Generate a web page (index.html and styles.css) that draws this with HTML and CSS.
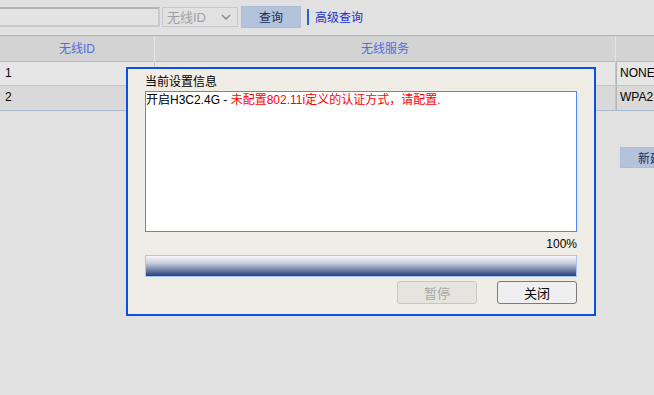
FILE: index.html
```html
<!DOCTYPE html>
<html lang="zh-CN">
<head>
    <meta charset="UTF-8">
    <title>无线服务</title>
    <link rel="stylesheet" href="styles.css">
</head>
<body>

    <div class="toolbar">
        <div class="search-box"></div>
        <div class="fake-select">
            <span>无线ID</span>
            <svg width="10" height="6" viewBox="0 0 10 6"><path d="M1 1 L5 5 L9 1" fill="none" stroke="#8a8a8a" stroke-width="1.5"/></svg>
        </div>
        <button class="btn-query">查询</button>
        <span class="bar"></span>
        <a class="adv-link" href="#">高级查询</a>
    </div>

    <div class="table">
        <div class="cell head">无线ID</div>
        <div class="cell head">无线服务</div>
        <div class="cell head last"></div>

        <div class="cell row1">1</div>
        <div class="cell row1"></div>
        <div class="cell row1 last">NONE</div>

        <div class="cell row2">2</div>
        <div class="cell row2"></div>
        <div class="cell row2 last">WPA2</div>
    </div>

    <div class="actions">
        <button class="btn-new">新建</button>
    </div>

    <div class="dialog">
        <div class="dlg-label">当前设置信息</div>
        <div class="log">开启H3C2.4G - <span class="warn">未配置802.11i定义的认证方式，请配置.</span></div>
        <div class="percent">100%</div>
        <div class="progress"></div>
        <div class="dlg-buttons">
            <button class="dlg-btn" disabled>暂停</button>
            <button class="dlg-btn">关闭</button>
        </div>
    </div>

</body>
</html>
```

FILE: styles.css
```css
body {
    margin: 0;
    background-color: #e1e1e1;
    font-family: "Liberation Sans", "Noto Sans CJK SC", sans-serif;
    font-size: 12px;
    color: #000;
    overflow: hidden;
}
.toolbar {
    display: flex;
    align-items: center;
    border-bottom: 1px solid #a3b6cf;
    box-sizing: border-box;
    height: 36px;
    padding-bottom: 2px;
}
.search-box {
    width: 164px;
    height: 20px;
    margin-left: -4px;
    box-sizing: border-box;
    border: 2px solid #b4b4b4;
    border-right-color: #cacaca;
    border-bottom-color: #cacaca;
    background: #e3e3e3;
}
.fake-select {
    width: 76px;
    height: 20px;
    margin-left: 2px;
    box-sizing: border-box;
    border: 1px solid #c9c9c9;
    display: flex;
    align-items: center;
    justify-content: space-between;
    padding: 0 6px 0 4px;
    color: #a0a0a0;
    font-size: 13px;
}
.btn-query {
    width: 60px;
    height: 22px;
    margin-left: 3px;
    border: 1px solid #aebdd6;
    background: #b3c3dc;
    font-family: inherit;
    font-size: 12px;
    color: #1a2a50;
    padding: 0;
}
.bar {
    width: 2px;
    height: 16px;
    margin-left: 6px;
    background: #2066c4;
}
.adv-link {
    margin-left: 6px;
    color: #1a2ed0;
    text-decoration: none;
    font-size: 12px;
}
.table {
    display: grid;
    grid-template-columns: 155px 461px 1fr;
    border-bottom: 1px solid #a9bbd2;
}
.cell {
    box-sizing: border-box;
    height: 24px;
    line-height: 23px;
    padding-left: 5px;
    border-bottom: 1px solid #c4c4c4;
    border-right: 1px solid #c4c4c4;
}
.cell.last {
    border-right: none;
    padding-left: 3px;
}
.head {
    height: 26px;
    line-height: 26px;
    background: #d3d3d3;
    color: #4f6ee0;
    text-align: center;
    padding-left: 0;
    border-bottom: 1px solid #a9bbd2;
    border-right: 1px solid #e4e4e4;
}
.head.last {
    border-right: none;
}
.row1 {
    background: #e6e6e6;
}
.row2 {
    background: #d9d9d9;
    border-bottom: none;
}
.row1.last, .row2.last {
    border-left: 1px solid #b5b5b5;
}
.actions {
    display: flex;
    justify-content: flex-end;
    padding-top: 36px;
}
.btn-new {
    width: 60px;
    height: 21px;
    margin-right: -26px;
    border: 1px solid #aebdd6;
    background: #b3c3dc;
    font-family: inherit;
    font-size: 12px;
    color: #1a2a50;
    padding: 0;
    text-align: left;
    padding-left: 17px;
}
.dialog {
    position: absolute;
    left: 126px;
    top: 67px;
    width: 470px;
    height: 249px;
    box-sizing: border-box;
    border: 2px solid #0a50e6;
    background: #f0ede6;
    padding: 5px 17px 0 17px;
}
.dlg-label {
    height: 17px;
    line-height: 17px;
    font-size: 12px;
}
.log {
    height: 141px;
    box-sizing: border-box;
    border: 1px solid #4d88f0;
    background: #fff;
    line-height: 17px;
    padding: 0;
    white-space: nowrap;
}
.warn {
    color: #ff0000;
}
.percent {
    text-align: right;
    height: 23px;
    line-height: 24px;
}
.progress {
    height: 22px;
    box-sizing: border-box;
    border: 1px solid #a7c7fa;
    background: linear-gradient(#f6f7fa, #c9cfdd 35%, #6f82a8 70%, #223f7e);
}
.dlg-buttons {
    display: flex;
    justify-content: flex-end;
    gap: 20px;
    margin-top: 4px;
}
.dlg-btn {
    width: 80px;
    height: 23px;
    border: 1px solid #7a7a7a;
    border-radius: 3px;
    background: #efefef;
    font-family: inherit;
    font-size: 13px;
    color: #000;
    padding: 0;
}
.dlg-btn:disabled {
    border-color: #c8c6c0;
    background: #e6e4de;
    color: #a8a8a8;
}
```
